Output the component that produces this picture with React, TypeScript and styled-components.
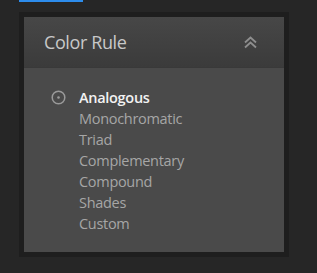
import styled, { createGlobalStyle } from "styled-components";

const GlobalStyle = createGlobalStyle`
  html, body {
    margin: 0;
    padding: 0;
    background: #262626;
    font-family: "Open Sans", "Noto Sans", sans-serif;
  }
`;

const rules = [
  "Analogous",
  "Monochromatic",
  "Triad",
  "Complementary",
  "Compound",
  "Shades",
  "Custom",
];

const Page = styled.div`
  width: 317px;
  height: 273px;
  padding-left: 19px;
  box-sizing: border-box;
  overflow: hidden;
`;

const TabMarker = styled.div`
  width: 64px;
  height: 2px;
  background: #2d8ceb;
`;

const Frame = styled.div`
  margin-top: 10px;
  width: 270px;
  padding: 5px;
  box-sizing: border-box;
  background: #1e1e1e;
`;

const Panel = styled.section`
  display: flex;
  flex-direction: column;
  background: #4a4a4a;
  height: 235px;
`;

const Header = styled.div`
  display: flex;
  align-items: center;
  justify-content: space-between;
  height: 50px;
  padding: 0 26px 0 20px;
  background: linear-gradient(#474747, #3b3b3b);
  border-bottom: 1px solid #393939;
`;

const Title = styled.h2`
  margin: 0;
  font-size: 18px;
  font-weight: 400;
  color: #c8c8c8;
  letter-spacing: -0.4px;
`;

const List = styled.ul`
  list-style: none;
  margin: 0;
  padding: 19px 0 0 27px;
`;

const Item = styled.li<{ $active: boolean }>`
  display: flex;
  align-items: center;
  gap: 13px;
  height: 21px;
  font-size: 14.5px;
  font-weight: ${(p) => (p.$active ? 600 : 400)};
  color: ${(p) => (p.$active ? "#f2f2f2" : "#a6a6a6")};
  letter-spacing: -0.3px;
`;

const Marker = styled.span`
  width: 15px;
  height: 15px;
  display: flex;
  align-items: center;
  justify-content: center;
`;

const Radio = () => (
  <svg width="15" height="15" viewBox="0 0 15 15">
    <circle cx="7.5" cy="7.5" r="6.3" fill="none" stroke="#9a9a9a" strokeWidth="1.5" />
    <circle cx="7.5" cy="7.5" r="1.3" fill="#9a9a9a" />
  </svg>
);

const Collapse = () => (
  <svg width="15" height="14" viewBox="0 0 15 14">
    <path d="M2 7.5 L7.5 2.5 L13 7.5" fill="none" stroke="#8e8e8e" strokeWidth="1.8" />
    <path d="M2 12.5 L7.5 7.5 L13 12.5" fill="none" stroke="#8e8e8e" strokeWidth="1.8" />
  </svg>
);

export default function App() {
  return (
    <Page>
      <GlobalStyle />
      <TabMarker />
      <Frame>
        <Panel>
          <Header>
            <Title>Color Rule</Title>
            <Collapse />
          </Header>
          <List>
            {rules.map((r, i) => (
              <Item key={r} $active={i === 0}>
                <Marker>{i === 0 && <Radio />}</Marker>
                {r}
              </Item>
            ))}
          </List>
        </Panel>
      </Frame>
    </Page>
  );
}
